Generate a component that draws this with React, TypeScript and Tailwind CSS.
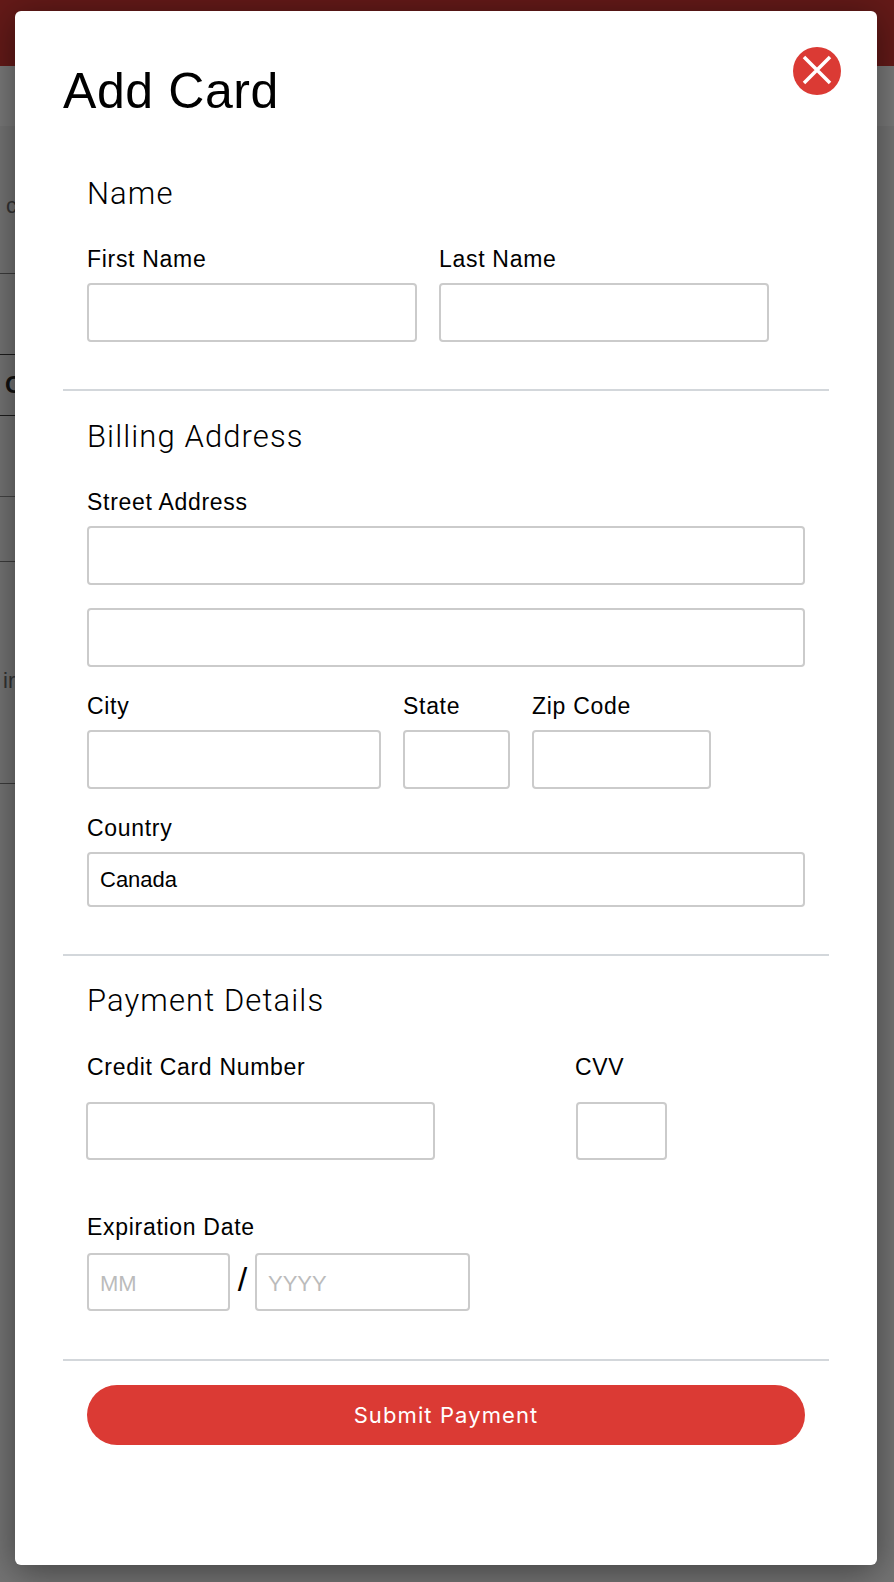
import React from 'react';

const labelCls = "block h-[28px] text-[23px] leading-[28px] tracking-[0.7px] text-black";
const headingCls = "h-[36px] text-[31px] leading-[36px] font-light tracking-[1.1px] text-black [font-family:Roboto,sans-serif]";
const inputCls = "block rounded-[4px] border-2 border-[#cbcbcb] bg-white px-[11px] outline-none text-[22px] text-black placeholder:text-[#bbbbbb]";

function CloseButton() {
  return (
    <button className="absolute top-[36px] right-[36px] flex h-[48px] w-[48px] items-center justify-center rounded-full bg-[#db3a34]">
      <svg className="mb-[2px]" width="30" height="30" viewBox="0 0 30 30" fill="none" stroke="white" strokeWidth="3.5">
        <path d="M2 2 L28 28 M28 2 L2 28" />
      </svg>
    </button>
  );
}

function Rule({ className }: { className: string }) {
  return <hr className={`h-[2px] w-[766px] border-0 bg-[#d3d7db] ${className}`} />;
}

export default function App() {
  return (
    <div className="relative h-[1582px] w-[894px] overflow-hidden bg-[#747474] font-['Liberation_Sans',Arial,sans-serif]">
      {/* page behind the dialog, only the left strip shows */}
      <div className="h-[66px] bg-[#641a18]" />
      <div className="h-[60px] bg-[#7a7a7a]" />
      <div className="w-[300px] text-[#333333]">
        <div className="h-[148px] border-b-[1px] border-[#3c3c3c] pt-[66px] pl-[6px] text-[22px] leading-[28px]">c</div>
        <div className="h-[81px] border-b-[1px] border-[#1c1c1c]" />
        <div className="h-[61px] border-b-[1px] border-[#1c1c1c] pt-[16px] pl-[5px] text-[24px] leading-[28px] font-bold text-[#111111]">C</div>
        <div className="h-[81px] border-b-[1px] border-[#444444]" />
        <div className="h-[65px] border-b-[1px] border-[#3c3c3c]" />
        <div className="h-[222px] border-b-[1px] border-[#3c3c3c] pt-[105px] pl-[3px] text-[22px] leading-[28px]">ir</div>
      </div>

      <div className="absolute top-[11px] left-[15px] h-[1554px] w-[862px] rounded-[6px] bg-white px-[48px] pt-[52px] shadow-[0_6px_36px_rgba(0,0,0,0.45)]">
        <CloseButton />
        <h1 className="h-[56px] text-[50px] leading-[56px] tracking-[0.6px] text-black">Add Card</h1>

        <div className="mt-[57px] px-[24px]">
          <h3 className={headingCls}>Name</h3>
          <div className="mt-[33px] flex gap-[22px]">
            <div>
              <label className={labelCls}>First Name</label>
              <input className={`${inputCls} mt-[10px] h-[59px] w-[330px]`} />
            </div>
            <div>
              <label className={labelCls}>Last Name</label>
              <input className={`${inputCls} mt-[10px] h-[59px] w-[330px]`} />
            </div>
          </div>
        </div>

        <Rule className="mt-[47px]" />

        <div className="mt-[28px] px-[24px]">
          <h3 className={headingCls}>Billing Address</h3>
          <label className={`${labelCls} mt-[33px]`}>Street Address</label>
          <input className={`${inputCls} mt-[10px] h-[59px] w-[718px]`} />
          <input className={`${inputCls} mt-[23px] h-[59px] w-[718px]`} />
          <div className="mt-[25px] flex gap-[22px]">
            <div>
              <label className={labelCls}>City</label>
              <input className={`${inputCls} mt-[10px] h-[59px] w-[294px]`} />
            </div>
            <div>
              <label className={labelCls}>State</label>
              <input className={`${inputCls} mt-[10px] h-[59px] w-[107px]`} />
            </div>
            <div>
              <label className={labelCls}>Zip Code</label>
              <input className={`${inputCls} mt-[10px] h-[59px] w-[179px]`} />
            </div>
          </div>
          <label className={`${labelCls} mt-[25px]`}>Country</label>
          <select className={`${inputCls} mt-[10px] h-[55px] w-[718px] appearance-none text-[21.5px]`} defaultValue="Canada">
            <option>Canada</option>
          </select>
        </div>

        <Rule className="mt-[47px]" />

        <div className="mt-[27px] px-[24px]">
          <h3 className={headingCls}>Payment Details</h3>
          <div className="mt-[34px] flex">
            <div className="w-[488px]">
              <label className={labelCls}>Credit Card Number</label>
              <input className={`${inputCls} mt-[21px] -ml-[1px] h-[58px] w-[349px]`} />
            </div>
            <div>
              <label className={labelCls}>CVV</label>
              <input className={`${inputCls} mt-[21px] ml-[1px] h-[58px] w-[91px]`} />
            </div>
          </div>
          <label className={`${labelCls} mt-[53px]`}>Expiration Date</label>
          <div className="mt-[12px] flex items-start">
            <input className={`${inputCls} h-[58px] w-[143px] pt-[3px]`} placeholder="MM" />
            <span className="flex h-[58px] w-[25px] items-center justify-center pb-[7px] text-[34px] leading-none text-black">/</span>
            <input className={`${inputCls} h-[58px] w-[215px] pt-[3px]`} placeholder="YYYY" />
          </div>
        </div>

        <Rule className="mt-[48px]" />

        <div className="mt-[24px] px-[24px]">
          <button className="h-[60px] w-[718px] rounded-full bg-[#db3a34] text-[22px] tracking-[1.1px] text-white [font-family:Inter,sans-serif]">
            Submit Payment
          </button>
        </div>
      </div>
    </div>
  );
}
